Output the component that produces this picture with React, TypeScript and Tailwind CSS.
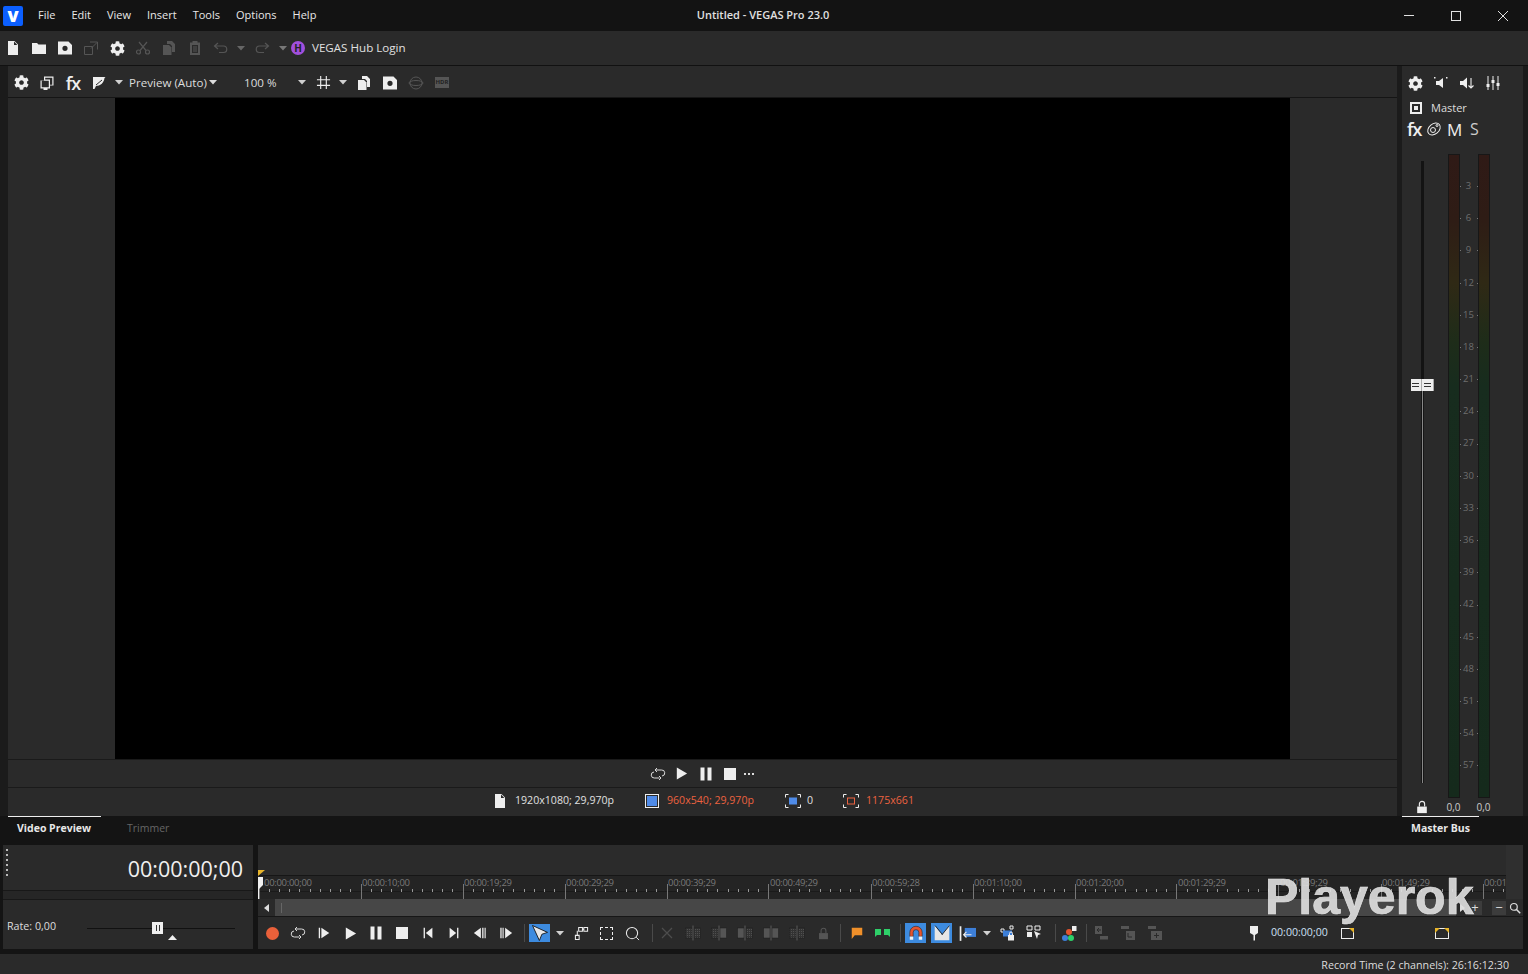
import type { ReactNode } from 'react';
import { FaCog } from 'react-icons/fa';

const font = { fontFamily: '"Open Sans", "Noto Sans", sans-serif' };

const S = ({ size = 16, className = '', children }: { size?: number; className?: string; children: ReactNode }) => (
  <svg width={size} height={size} viewBox="0 0 16 16" fill="currentColor" className={className}>
    {children}
  </svg>
);

const Slot = ({ w = 26, className = '', children }: { w?: number; className?: string; children?: ReactNode }) => (
  <div className={`flex shrink-0 items-center justify-center ${className}`} style={{ width: w }}>
    {children}
  </div>
);

const Caret = ({ className = 'text-[#d0d0d0]' }: { className?: string }) => (
  <svg width="8" height="5" viewBox="0 0 8 5" className={`shrink-0 ${className}`} fill="currentColor"><path d="M0 0h8L4 4.5z" /></svg>
);

const Sep = () => <div className="h-[18px] w-px shrink-0 bg-[#4a4a4a]" />;

const FileIcon = () => (
  <S><path fillRule="evenodd" d="M3 1h6.5L13 4.5V15H3zM9 1.6V5h3.4z" /></S>
);
const FolderIcon = () => <S><path d="M1 3h5l1.5 1.5H15V14H1z" /></S>;
const SaveIcon = () => (
  <S><path fillRule="evenodd" d="M1 1.500h10.500L15 5v9.500H1zM8 5.700a2.600 2.600 0 1 0 0 5.200 2.600 2.600 0 0 0 0-5.200z" /></S>
);
const Gear = () => <FaCog size={15} />;
const CopyIcon = () => (
  <S><path d="M6 1h5l3 3v8H11V6L9 4H6z" /><path fillRule="evenodd" d="M2 5h6l2.500 2.500V15H2z" /></S>
);
const Scissors = () => (
  <S>
    <g fill="none" stroke="currentColor" strokeWidth="1.2">
      <circle cx="3.500" cy="12" r="2" /><circle cx="12.500" cy="12" r="2" />
      <path d="M5 10.500 12 2M11 10.500 4 2" />
    </g>
  </S>
);
const Paste = () => (
  <S>
    <path fillRule="evenodd" d="M5.500 1h5v1.500H13V15H3V2.500h2.500zM5 5v8h6V5z" />
    <path d="M6 6.500h4v1H6zM6 8.500h4v1H6zM6 10.500h4v1H6z" />
  </S>
);
const Undo = ({ flip = false }: { flip?: boolean }) => (
  <S className={flip ? '-scale-x-100' : ''}>
    <path d="M5 3 1.500 6 5 9M2 6h8.500a3 3 0 0 1 0 6.500H6" fill="none" stroke="currentColor" strokeWidth="1.200" />
  </S>
);
const Loop = () => (
  <S>
    <path d="M6 4h5.500a3 3 0 0 1 .5 6M9.500 12H4.500A3 3 0 0 1 4 6M7 2 5 4l2 2M9 10l2 2-2 2" fill="none" stroke="currentColor" strokeWidth="0.900" />
  </S>
);
const Play = ({ size = 16 }: { size?: number }) => <S size={size}><path d="M3 1.500 14 8 3 14.500z" /></S>;
const Pause = () => <S><path d="M2.500 1.500h4v13h-4zM9.500 1.500h4v13h-4z" /></S>;
const Stop = () => <S><path d="M2 2h12v12H2z" /></S>;
const PlayBar = () => <S size={14}><path d="M2 2h1.500v12H2zM5 2l9 6-9 6z" /></S>;
const ToStart = () => <S size={14}><path d="M3 2h1.500v12H3zM13 2v12L5.500 8z" /></S>;
const ToEnd = () => <S size={14}><path d="M11.500 2H13v12h-1.500zM3 2v12l7.500-6z" /></S>;
const PrevFrame = () => <S size={14}><path d="M9 2v12L1 8zM10.500 2H12v12h-1.500zM13.200 2h1.300v12h-1.300z" /></S>;
const NextFrame = () => <S size={14}><path d="M7 2v12l8-6zM1.500 2H3v12H1.500zM4 2h1.300v12H4z" /></S>;
const Lock = ({ size = 16 }: { size?: number }) => (
  <S size={size}>
    <path d="M2.500 7.500h11V15h-11z" />
    <path d="M5 7.500V4.500a3 3 0 0 1 6 0v3" fill="none" stroke="currentColor" strokeWidth="1.300" />
  </S>
);
const SelArrow = () => (
  <S size={20}><path d="M2 2l12 5.500-4.500 1.500L7.500 14z" fill="#e8e8e8" stroke="#111" strokeWidth="0.700" /></S>
);
const Magnet = () => (
  <S size={18}>
    <path d="M2.500 11V7.500a5.500 5.500 0 0 1 11 0V11h-3V7.500a2.500 2.500 0 0 0-5 0V11z" fill="#e5542f" stroke="#222" strokeWidth="0.500" />
    <path d="M2.500 11h3v3h-3zM10.500 11h3v3h-3z" fill="#f2f2f2" />
  </S>
);
const Quant = () => (
  <S size={18}><path d="M1.500 1.500 8 9.500l6.500-8v13h-13z" fill="#e6e6e6" /><path d="M2 1.500 8.500 9.500M14.500 1.500 8 9.500" stroke="#222" strokeWidth="0.800" /></S>
);
// event edit icons: left block, cut line, right block, hatched where the block is shaded
const Clip = ({ left, right }: { left?: boolean; right?: boolean }) => (
  <svg width="16" height="16" viewBox="0 0 16 16">
    <defs>
      <pattern id="hatch" width="2" height="2" patternUnits="userSpaceOnUse">
        <rect width="2" height="2" fill="#333" /><rect width="1" height="1" fill="#505050" />
      </pattern>
    </defs>
    <rect x="0.500" y="3" width="6.500" height="10" fill={left ? 'url(#hatch)' : '#555'} stroke="#1c1c1c" strokeWidth="0.500" />
    <rect x="9" y="3" width="6.500" height="10" fill={right ? 'url(#hatch)' : '#555'} stroke="#1c1c1c" strokeWidth="0.500" />
    <rect x="7.500" y="0.500" width="1" height="15" fill="#5a5a5a" />
  </svg>
);
const Bracket = ({ children }: { children: ReactNode }) => (
  <svg width="16" height="14" viewBox="0 0 16 14" className="shrink-0">
    <path d="M.5 3.500v-3h3M12.500.5h3v3M15.500 10.500v3h-3M3.500 13.500h-3v-3" fill="none" stroke="#eee" />
    {children}
  </svg>
);

const menu = ['File', 'Edit', 'View', 'Insert', 'Tools', 'Options', 'Help'];
const dbLabels = [3, 6, 9, 12, 15, 18, 21, 24, 27, 30, 33, 36, 39, 42, 45, 48, 51, 54, 57];
const rulerLabels = [
  '00:00:10;00', '00:00:19;29', '00:00:29;29', '00:00:39;29', '00:00:49;29', '00:00:59;28',
  '00:01:10;00', '00:01:20;00', '00:01:29;29', '00:01:39;29', '00:01:49;29', '00:01',
];

function TitleBar() {
  return (
    <div className="relative flex h-[31px] shrink-0 items-center bg-[#131313] text-[11px] text-[#e8e8e8]">
      <div className="ml-[3px] flex h-[20px] w-[20px] items-center justify-center rounded-[2px] bg-[#0b5fff] text-[16px] font-extrabold text-white">V</div>
      <div className="ml-[15px] flex gap-[16px]">
        {menu.map((m) => <span key={m}>{m}</span>)}
      </div>
      <div className="absolute left-0 right-[2px] top-[7px] text-center font-semibold text-[#e0e0e0]">Untitled - VEGAS Pro 23.0</div>
      <div className="ml-auto flex pr-[2px]">
        <Slot w={47}><div className="h-px w-[10px] bg-[#e0e0e0]" /></Slot>
        <Slot w={47}><div className="h-[10px] w-[10px] border border-[#e0e0e0]" /></Slot>
        <Slot w={47}>
          <svg width="12" height="12" viewBox="0 0 12 12" stroke="#e0e0e0"><path d="M1 1l10 10M11 1 1 11" /></svg>
        </Slot>
      </div>
    </div>
  );
}

function MainToolbar() {
  return (
    <div className="flex h-[35px] shrink-0 items-center border-b border-[#111] bg-[#2a2a2a] text-[#eee]">
      <Slot><FileIcon /></Slot>
      <Slot><FolderIcon /></Slot>
      <Slot><SaveIcon /></Slot>
      <Slot className="text-[#555]">
        <S><path d="M1.500 6.500h8v8h-8zM7 2h7.500v7.500M14 2.500 8 8.500" fill="none" stroke="currentColor" /></S>
      </Slot>
      <Slot><Gear /></Slot>
      <Slot className="text-[#555]"><Scissors /></Slot>
      <Slot className="text-[#555]"><CopyIcon /></Slot>
      <Slot className="text-[#555]"><Paste /></Slot>
      <Slot className="text-[#555]"><Undo /></Slot>
      <Slot w={14}><Caret className="text-[#666]" /></Slot>
      <Slot w={28} className="text-[#555]"><Undo flip /></Slot>
      <Slot w={13}><Caret className="text-[#777]" /></Slot>
      <div className="ml-[2px] flex h-[14px] w-[14px] items-center justify-center rounded-full bg-[#a14fdc] text-[10px] font-bold text-[#222]">H</div>
      <span className="ml-[7px] text-[11.600px] text-[#e0e0e0]">VEGAS Hub Login</span>
    </div>
  );
}

function PreviewToolbar() {
  return (
    <div className="flex h-[32px] shrink-0 items-center border-b border-[#151515] pt-[2px] text-[#eee]">
      <Slot><Gear /></Slot>
      <Slot>
        <S><path fillRule="evenodd" d="M5 1.500h9.500v9H11v3H8.500v1.500h-4v-1.500H1.500v-8H5zM6.200 4.500H11v5.200h2.300V2.700H6.200zM2.700 5.700V12.300h7.100V5.700z" /></S>
      </Slot>
      <Slot><span className="text-[18px] font-semibold leading-none tracking-[-1px]">fx</span></Slot>
      <Slot>
        <S><path d="M2 2h12.500l-1 1C13 8 9 11 5 11l-1.500 3H2z" /><path d="M5 10 11 5" stroke="#2a2a2a" /></S>
      </Slot>
      <Slot w={14}><Caret /></Slot>
      <span className="ml-[3px] w-[80px] text-[11.600px] text-[#ddd]">Preview (Auto)</span>
      <Caret className="text-[#ddd]" />
      <span className="ml-[27px] w-[54px] text-[11.600px] text-[#ddd]">100 %</span>
      <Caret />
      <Slot w={30} className="ml-[2px]">
        <S size={15}><path d="M5 1v14M11 1v14M1 5h14M1 11h14" stroke="currentColor" strokeWidth="1.200" fill="none" /></S>
      </Slot>
      <Slot w={10}><Caret /></Slot>
      <Slot w={32}><CopyIcon /></Slot>
      <Slot w={20}><SaveIcon /></Slot>
      <Slot w={32} className="text-[#555]">
        <S><circle cx="8" cy="8" r="6" fill="none" stroke="currentColor" /><ellipse cx="8" cy="8" rx="7" ry="2.500" fill="none" stroke="currentColor" /></S>
      </Slot>
      <Slot w={20}>
        <div className="flex h-[11px] w-[14px] items-center justify-center bg-[#555] text-[6px] font-bold text-[#222]">HDR</div>
      </Slot>
    </div>
  );
}

function PreviewPanel() {
  return (
    <div className="flex min-w-0 flex-1 flex-col bg-[#2a2a2a]">
      <PreviewToolbar />
      <div className="flex flex-1 px-[107px]">
        <div className="flex-1 bg-black" />
      </div>
      <div className="flex h-[29px] shrink-0 items-center justify-center gap-[8px] border-y border-[#1a1a1a] pr-[2px] text-[#eee]">
        <Slot w={16}><Loop /></Slot>
        <Slot w={16}><Play size={15} /></Slot>
        <Slot w={16}><Pause /></Slot>
        <Slot w={16}><Stop /></Slot>
        <div className="ml-[-2px] flex gap-[2px]">
          {[0, 1, 2].map((i) => <div key={i} className="h-[2px] w-[2px] bg-[#ddd]" />)}
        </div>
      </div>
      <div className="flex h-[28px] shrink-0 items-center pb-[2px] pl-[484px] text-[10.600px]">
        <Slot w={16} className="text-[#eee]"><FileIcon /></Slot>
        <span className="ml-[7px] w-[130px] text-[#e0e0e0]">1920x1080; 29,970p</span>
        <div className="flex h-[14px] w-[14px] items-center justify-center border border-[#eee]"><div className="h-[10px] w-[10px] bg-[#4f8be8]" /></div>
        <span className="ml-[8px] w-[118px] text-[#ec6240]">960x540; 29,970p</span>
        <Bracket><rect x="4" y="3.500" width="8" height="7" fill="#4f8be8" /></Bracket>
        <span className="ml-[6px] w-[36px] text-[#e0e0e0]">0</span>
        <Bracket><rect x="4.500" y="4" width="7" height="6" fill="none" stroke="#ec6240" /></Bracket>
        <span className="ml-[7px] text-[#ec6240]">1175x661</span>
      </div>
    </div>
  );
}

function Meter() {
  return (
    <div className="h-full w-[12px] border border-[#171717] bg-[linear-gradient(to_bottom,#2f1a16_0%,#2e1c15_10%,#2f2915_20%,#1e2c19_29%,#172c1e_36%,#152a1c_100%)]" />
  );
}

function MixerPanel() {
  return (
    <div className="flex w-[121px] shrink-0 flex-col bg-[#2a2a2a] text-[#eee]">
      <div className="flex h-[34px] shrink-0 items-center">
        <Slot><Gear /></Slot>
        <Slot>
          <S><path d="M3 6h3l4-3v10l-4-3H3z" /><path d="M1 2h1.500v1.500H1zM13 2h1.500v1.500H13z" /></S>
        </Slot>
        <Slot>
          <S><path d="M1 6h3l4-3.500v11L4 10H1z" /><path d="M12 3v10M9.500 10.500 12 13l2.500-2.500" fill="none" stroke="currentColor" strokeWidth="1.100" /></S>
        </Slot>
        <Slot>
          <S><path d="M3 1v14M8 1v14M13 1v14" stroke="currentColor" fill="none" /><path d="M1.500 9h3v3h-3zM6.500 5h3v3h-3zM11.500 8h3v3h-3z" /></S>
        </Slot>
      </div>
      <div className="flex h-[16px] shrink-0 items-center pl-[8px]">
        <div className="flex h-[12px] w-[12px] items-center justify-center border-2 border-[#eee]"><div className="h-[4px] w-[4px] bg-[#eee]" /></div>
        <span className="ml-[9px] text-[11px] text-[#ddd]">Master</span>
      </div>
      <div className="flex h-[26px] shrink-0 items-center pl-[5px]">
        <span className="w-[19px] text-[18px] font-semibold leading-none tracking-[-1px]">fx</span>
        <Slot w={16}>
          <S><g fill="none" stroke="currentColor"><ellipse cx="8" cy="8" rx="7" ry="5" transform="rotate(-40 8 8)" /><circle cx="7" cy="9" r="2.500" /><circle cx="11" cy="4.500" r="1" /></g></S>
        </Slot>
        <span className="ml-[5px] w-[23px] text-[17px] leading-none">M</span>
        <span className="text-[16px] leading-none text-[#ccc]">S</span>
      </div>
      <div className="mt-[12px] flex h-[644px] shrink-0">
        <div className="flex w-[46px] shrink-0 flex-col items-center pr-[6px]">
          <div className="mt-[7px] h-[218px] w-[3px] bg-[#131313]" />
          <div className="flex h-[12px]">
            {[0, 1].map((i) => (
              <div key={i} className="flex w-[11.500px] flex-col items-center justify-center gap-[2px] border-r border-[#aaa] bg-[#eee]">
                <div className="h-px w-[7px] bg-[#333]" /><div className="h-px w-[7px] bg-[#333]" />
              </div>
            ))}
          </div>
          <div className="h-[392px] w-[3px] border-x border-[#161616] bg-[#888]" />
        </div>
        <Meter />
        <div className="flex w-[18px] shrink-0 flex-col pt-[16px]">
          {dbLabels.map((d) => (
            <div key={d} className="relative flex h-[32.200px] shrink-0 items-center justify-center pr-[1px] text-[9.500px] text-[#6e6e6e]">
              {d}
              <span className="absolute left-0 top-1/2 h-px w-px bg-[#777]" />
              <span className="absolute right-0 top-1/2 h-px w-px bg-[#777]" />
            </div>
          ))}
        </div>
        <Meter />
      </div>
      <div className="flex flex-1 items-center pb-[6px]">
        <Slot w={40}><Lock size={14} /></Slot>
        <span className="w-[23px] pt-[2px] text-center text-[10px] text-[#ccc]">0,0</span>
        <span className="ml-[7px] w-[23px] pt-[2px] text-center text-[10px] text-[#ccc]">0,0</span>
      </div>
    </div>
  );
}

function Tabs() {
  return (
    <div className="flex h-[29px] shrink-0 bg-[#141414] text-[10.500px]">
      <div className="ml-[8px] w-[93px] border-t border-[#eee] pt-[4px] pl-[9px] font-bold text-[#e8e8e8]">Video Preview</div>
      <div className="ml-[26px] pt-[5px] text-[#666]">Trimmer</div>
      <div className="ml-auto mr-[49px] w-[77px] border-t border-[#eee] pt-[4px] pl-[9px] font-bold text-[#e8e8e8]">Master Bus</div>
    </div>
  );
}

function TimePanel() {
  return (
    <div className="ml-[3px] flex w-[250px] shrink-0 flex-col bg-[#2a2a2a]">
      <div className="relative flex h-[46px] shrink-0 items-center justify-end border-b border-[#181818] pr-[10px] pt-[4px] text-[21.500px] text-[#f0f0f0]">
        <div className="absolute left-[3px] top-[4px] flex flex-col gap-[3px]">
          {[0, 1, 2, 3, 4, 5].map((i) => <div key={i} className="h-[2px] w-[2px] bg-[#bbb]" />)}
        </div>
        00:00:00;00
      </div>
      <div className="h-[9px] shrink-0 border-b border-[#181818] bg-[#262626]" />
      <div className="flex flex-1 items-center pl-[4px] pt-[4px]">
        <span className="w-[80px] text-[10.700px] text-[#ddd]">Rate: 0,00</span>
        <div className="relative mt-[4px] h-px w-[148px] bg-[#111]">
          <div className="absolute left-[65px] top-[-6px] flex h-[12px] w-[11px] items-center justify-center gap-[2px] bg-[#eee]">
            <div className="h-[6px] w-px bg-[#333]" /><div className="h-[6px] w-px bg-[#333]" />
          </div>
          <svg className="absolute left-[81px] top-[7px]" width="9" height="5" viewBox="0 0 9 5" fill="#eee"><path d="M4.500 0 9 5H0z" /></svg>
        </div>
      </div>
    </div>
  );
}

function Ruler() {
  const ticks = [];
  for (let i = 0; i < 124; i++) {
    const x = 0.5 + i * 10.2;
    const major = i % 10 === 0;
    ticks.push(<rect key={i} x={Math.round(x)} y={major ? 8 : 13} width="1" height={major ? 15 : 3} fill={major ? '#777' : '#999'} />);
  }
  return (
    <div className="relative h-[24px] shrink-0 overflow-hidden border-t border-[#161616] bg-[#242424]">
      <div className="flex pl-[6px] text-[9.500px] leading-[13px] tracking-[-0.3px] text-[#787878]">
        <span className="w-[98px] shrink-0 overflow-hidden">00:00:00;00</span>
        {rulerLabels.map((l) => <span key={l} className="w-[102px] shrink-0">{l}</span>)}
      </div>
      <svg className="absolute inset-0" width="1260" height="24">
        <rect x="0" y="15" width="1260" height="1" fill="#1a1a1a" />
        {ticks}
      </svg>
      <svg className="absolute left-0 top-0" width="6" height="24" viewBox="0 0 6 24" fill="#f0f0f0">
        <path d="M0 1h5v8l-4 4v11H0z" />
      </svg>
    </div>
  );
}

function TimelinePanel() {
  return (
    <div className="ml-[5px] flex min-w-0 flex-1 flex-col bg-[#2a2a2a]">
      <div className="flex h-[54px] shrink-0">
        <div className="relative flex min-w-0 flex-1 flex-col">
          <div className="h-[30px] shrink-0 bg-[#2b2b2b]" />
          <Ruler />
          <svg className="absolute left-0 top-[25px]" width="7" height="6" viewBox="0 0 7 6" fill="#e8b52a"><path d="M0 0h7L0 6z" /></svg>
        </div>
        <div className="w-[17px] shrink-0 bg-[#2f2f2f]" />
      </div>
      <div className="flex h-[18px] shrink-0 items-center border-b border-[#171717] bg-[#2a2a2a]">
        <Slot w={17}><svg width="5" height="8" viewBox="0 0 5 8" fill="#ddd"><path d="M5 0v8L0 4z" /></svg></Slot>
        <div className="flex h-[17px] flex-1 items-center bg-[#474747] pl-[6px]"><div className="h-[10px] w-px bg-[#666]" /></div>
        <Slot w={12} className="text-[#eee]"><svg width="5" height="8" viewBox="0 0 5 8" fill="#ddd"><path d="M0 0v8l5-4z" /></svg></Slot>
        <Slot w={14} className="h-[14px] bg-[#3c3c3c] text-[13px] leading-none text-[#ddd]">+</Slot>
        <div className="w-[10px]" />
        <Slot w={14} className="h-[14px] bg-[#3c3c3c] text-[13px] leading-none text-[#ddd]">−</Slot>
        <Slot w={17} className="text-[#ddd]">
          <S size={12}><circle cx="6.500" cy="6.500" r="4.500" fill="none" stroke="currentColor" strokeWidth="1.600" /><path d="M10 10l5 5" stroke="currentColor" strokeWidth="2" /></S>
        </Slot>
      </div>
      <div className="flex flex-1 items-center text-[#eee]">
        <Slot className="ml-[1px]"><div className="h-[13px] w-[13px] rounded-full bg-[#e9603a]" /></Slot>
        <Slot><Loop /></Slot>
        <Slot><PlayBar /></Slot>
        <Slot><Play size={15} /></Slot>
        <Slot><Pause /></Slot>
        <Slot><Stop /></Slot>
        <Slot><ToStart /></Slot>
        <Slot><ToEnd /></Slot>
        <Slot><PrevFrame /></Slot>
        <Slot><NextFrame /></Slot>
        <div className="w-[5px]" />
        <Sep />
        <div className="ml-[4px] flex h-[18px] w-[21px] items-center justify-center bg-[#3d8bdf]"><SelArrow /></div>
        <Slot w={20}><Caret /></Slot>
        <Slot w={23}>
          <S size={15}><path d="M1.500 10h4v4.500h-4zM5 1.500h4v4H5zM10.500 1.500h4v4h-4zM3.500 10V5M9 3.500h1.500" fill="none" stroke="currentColor" strokeWidth="1.100" /></S>
        </Slot>
        <Slot><div className="h-[13px] w-[13px] border border-dashed border-[#eee]" /></Slot>
        <Slot>
          <S size={15}><circle cx="7.500" cy="7.500" r="6" fill="none" stroke="currentColor" strokeWidth="1.100" /><path d="M12 12l3 3" stroke="currentColor" /></S>
        </Slot>
        <div className="w-[7px]" />
        <Sep />
        <Slot w={28} className="text-[#4d4d4d]">
          <svg width="12" height="12" viewBox="0 0 12 12" stroke="currentColor" strokeWidth="1.300"><path d="M1 1l10 10M11 1 1 11" /></svg>
        </Slot>
        <Slot w={26} className="ml-[-1px]"><Clip left right /></Slot>
        <Slot w={26}><Clip left /></Slot>
        <Slot w={26}><Clip right /></Slot>
        <Slot w={26}><Clip /></Slot>
        <Slot w={26}><Clip left right /></Slot>
        <Slot w={26} className="text-[#555]"><Lock size={13} /></Slot>
        <div className="w-[4px]" />
        <Sep />
        <Slot w={32}>
          <S size={12}><path d="M1 1h14v10H5l-4 5z" fill="#f0902a" /></S>
        </Slot>
        <Slot w={19}>
          <svg width="15" height="8" viewBox="0 0 15 8" fill="#2ed069"><path d="M0 0h6v6H2L0 8zM9 0h6v8l-2-2H9z" /></svg>
        </Slot>
        <div className="w-[8px]" />
        <Sep />
        <div className="ml-[4px] flex h-[20px] w-[21px] items-center justify-center bg-[#3d8bdf]"><Magnet /></div>
        <div className="ml-[5px] flex h-[20px] w-[21px] items-center justify-center bg-[#3d8bdf]"><Quant /></div>
        <Slot w={26} className="ml-[2px]">
          <S size={18}><path d="M1.500 2h1.500v13H1.500z" /><path d="M6 3.500h10v8H6z" fill="#3d7fd8" /><path d="M12 9.500H5M7.500 7 5 9.500 7.500 12" fill="none" stroke="#eee" /></S>
        </Slot>
        <Slot w={14}><Caret /></Slot>
        <Slot w={28}>
          <S><path d="M1 4h3v3H1zM10 1h3v3h-3z" fill="none" stroke="currentColor" /><path d="M3 5.500h9v6H3z" fill="#3d7fd8" /><path d="M8 10h6v5.500H8z" /><path d="M9.500 10V8.500a1.500 1.500 0 0 1 3 0V10" fill="none" stroke="currentColor" /></S>
        </Slot>
        <Slot w={24}>
          <S><path d="M1 1h5v4H1zM9 1h5v4H9z" fill="none" stroke="currentColor" /><path d="M1 7h5v5H1z" fill="currentColor" /><path d="M8 6l7 3-3 1-1 4z" /></S>
        </Slot>
        <div className="w-[9px]" />
        <Sep />
        <Slot w={26}>
          <S>
            <circle cx="8" cy="7" r="3" fill="#e5542f" /><circle cx="4" cy="13" r="3" fill="#3d7fd8" /><circle cx="10" cy="13" r="3" fill="#2ed069" />
            <path d="M11 1h4.500v5H11z" fill="#eee" />
          </S>
        </Slot>
        <div className="w-[4px]" />
        <Sep />
        <Slot w={28} className="text-[#555]">
          <S><path d="M2 1h7v8H2z" /><path d="M7 11h8v3.500H7z" /><path d="M4 5h4M6 3 4 5l2 2" stroke="#2a2a2a" fill="none" /></S>
        </Slot>
        <Slot w={26} className="text-[#555]">
          <S><path d="M1 1h8v3H1z" /><path d="M6 6h9v9H6z" /><path d="M8 8v4h4" stroke="#2a2a2a" fill="none" /></S>
        </Slot>
        <Slot w={28} className="text-[#555]">
          <S><path d="M1 1h8v3H1z" /><path d="M4 6h11v9H4z" /><path d="M9.500 8v5M7 10.500h5" stroke="#2a2a2a" fill="none" /></S>
        </Slot>
        <Slot w={16} className="ml-[77px]">
          <S><path d="M4 1h8v7l-3 2v5.500H7.500V10L4 8z" /></S>
        </Slot>
        <span className="ml-[9px] w-[70px] text-[10.600px] text-[#cfe0f5]">00:00:00;00</span>
        <div className="relative h-[11px] w-[13px] border border-[#eee]"><div className="absolute right-[-1px] top-[-1px] border-l-[5px] border-t-[5px] border-l-transparent border-t-[#e8b52a]" /></div>
        <div className="relative ml-[81px] h-[11px] w-[14px] border border-[#eee]"><div className="absolute right-[-1px] top-[-1px] border-l-[5px] border-t-[5px] border-l-transparent border-t-[#e8b52a]" /><div className="absolute left-[-1px] top-[-1px] border-r-[5px] border-t-[5px] border-r-transparent border-t-[#e8b52a]" /></div>
      </div>
    </div>
  );
}

export default function App() {
  return (
    <div className="relative flex h-screen w-screen flex-col overflow-hidden bg-[#141414]" style={font}>
      <TitleBar />
      <MainToolbar />
      <div className="flex h-[750px] shrink-0 bg-[#1b1b1b] pl-[8px] pr-[5px]">
        <PreviewPanel />
        <div className="w-[5px] shrink-0" />
        <MixerPanel />
      </div>
      <Tabs />
      <div className="flex h-[104px] shrink-0 bg-[#141414] pr-[5px]">
        <TimePanel />
        <TimelinePanel />
      </div>
      <div className="mt-[5px] flex flex-1 items-center justify-end bg-[#2a2a2a] pr-[19px] pt-[2px] text-[10.700px] text-[#ddd]">
        Record Time (2 channels): 26:16:12:30
      </div>
      <div className="pointer-events-none absolute left-[1265px] top-[867px] text-[50px] font-bold leading-[60px] text-[#e0e0e0]/90 [-webkit-text-stroke:0.7px_#e0e0e0]" style={{ fontFamily: '"Liberation Sans", sans-serif' }}>
        Playerok
      </div>
    </div>
  );
}
